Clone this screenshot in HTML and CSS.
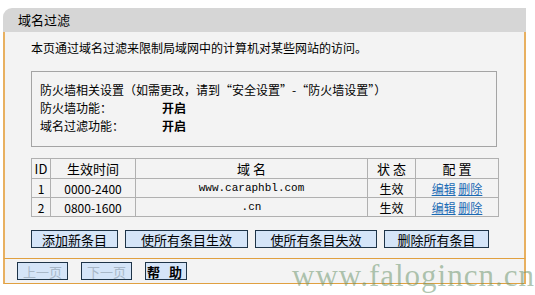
FILE: index.html
```html
<!DOCTYPE html>
<html lang="zh-CN">
<head>
    <meta charset="UTF-8">
    <title>域名过滤</title>
    <link rel="stylesheet" href="styles.css">
</head>
<body>
    <div class="panel">
        <div class="title">域名过滤</div>
        <div class="content">
            <p class="desc">本页通过域名过滤来限制局域网中的计算机对某些网站的访问。</p>

            <!-- 防火墙状态 -->
            <div class="info">
                <div>防火墙相关设置（如需更改，请到“安全设置”-“防火墙设置”）</div>
                <div class="row"><span class="label">防火墙功能：</span><b>开启</b></div>
                <div class="row"><span class="label">域名过滤功能：</span><b>开启</b></div>
            </div>

            <table class="list">
                <tr>
                    <th class="c-id">ID</th>
                    <th class="c-time">生效时间</th>
                    <th class="c-domain">域 名</th>
                    <th class="c-state">状 态</th>
                    <th>配 置</th>
                </tr>
                <tr>
                    <td>1</td>
                    <td>0000-2400</td>
                    <td class="mono">www.caraphbl.com</td>
                    <td>生效</td>
                    <td><a href="#">编辑</a> <a href="#">删除</a></td>
                </tr>
                <tr>
                    <td>2</td>
                    <td>0800-1600</td>
                    <td class="mono">.cn</td>
                    <td>生效</td>
                    <td><a href="#">编辑</a> <a href="#">删除</a></td>
                </tr>
            </table>

            <div class="actions">
                <button class="w1">添加新条目</button>
                <button class="w2">使所有条目生效</button>
                <button class="w3">使所有条目失效</button>
                <button class="w4">删除所有条目</button>
            </div>
        </div>
        <div class="footer">
            <button class="nav" disabled>上一页</button>
            <button class="nav" disabled>下一页</button>
            <button class="help">帮 助</button>
        </div>
    </div>
    <div class="watermark">www.falogincn.cn</div>
</body>
</html>
```

FILE: styles.css
```css
body {
    margin: 0;
    background: #fff;
    font-family: "Noto Sans CJK SC", "Liberation Sans", sans-serif;
    font-size: 12px;
    color: #000;
}

.panel {
    margin: 8px 0 0 3px;
    width: 523px;
}

.title {
    height: 24px;
    line-height: 24px;
    background: #d6d6d6;
    border-top-left-radius: 9px;
    padding-left: 15px;
    font-size: 13px;
}

.content {
    background: #f3f3f3;
    border-left: 2px solid #e8b060;
    border-right: 2px solid #e8b060;
    border-bottom: 1px solid #e0a040;
    padding: 8px 0 10px 26px;
}

.desc {
    margin: 0;
    line-height: 16px;
}

.info {
    margin-top: 15px;
    width: 448px;
    border: 1px solid #a4a4a4;
    padding: 9px 8px 11px 8px;
    line-height: 18px;
}

.info .label {
    display: inline-block;
    width: 122px;
}

.list {
    margin-top: 11px;
    width: 468px;
    border-collapse: collapse;
    text-align: center;
}

.list th,
.list td {
    border: 1px solid #b0b0b0;
    padding: 0;
    font-weight: normal;
    height: 18px;
    line-height: 17px;
}

.list th {
    height: 19px;
    font-size: 13px;
}

.c-id { width: 18px; }
.c-time { width: 84px; }
.c-domain { width: 231px; }
.c-state { width: 47px; }

.mono {
    font-family: "Liberation Mono", monospace;
    font-size: 11px;
}

.list a {
    color: #1a6ab4;
}

.actions {
    margin-top: 13px;
    display: flex;
    gap: 7px;
}

button {
    height: 18px;
    padding: 0;
    background: #d5e5f8;
    border: 1px solid #1e3448;
    font-family: "Noto Sans CJK SC", sans-serif;
    font-size: 13px;
    line-height: 15px;
    color: #000;
}

.w1 { width: 87px; }
.w2 { width: 123px; }
.w3 { width: 122px; }
.w4 { width: 105px; }

.footer {
    height: 24px;
    background: #f3f3f3;
    border-left: 2px solid #e8b060;
    border-right: 2px solid #e8b060;
    border-bottom: 1px solid #e0a040;
    display: flex;
    align-items: center;
    gap: 13px;
    padding-left: 12px;
}

.nav {
    width: 51px;
    color: #a8b8c8;
}

.help {
    width: 42px;
    font-weight: bold;
    letter-spacing: 3px;
}

.watermark {
    position: absolute;
    left: 292px;
    top: 258px;
    font-family: "Liberation Serif", serif;
    font-size: 31px;
    letter-spacing: 1px;
    color: rgba(110, 150, 110, 0.55);
}
```
